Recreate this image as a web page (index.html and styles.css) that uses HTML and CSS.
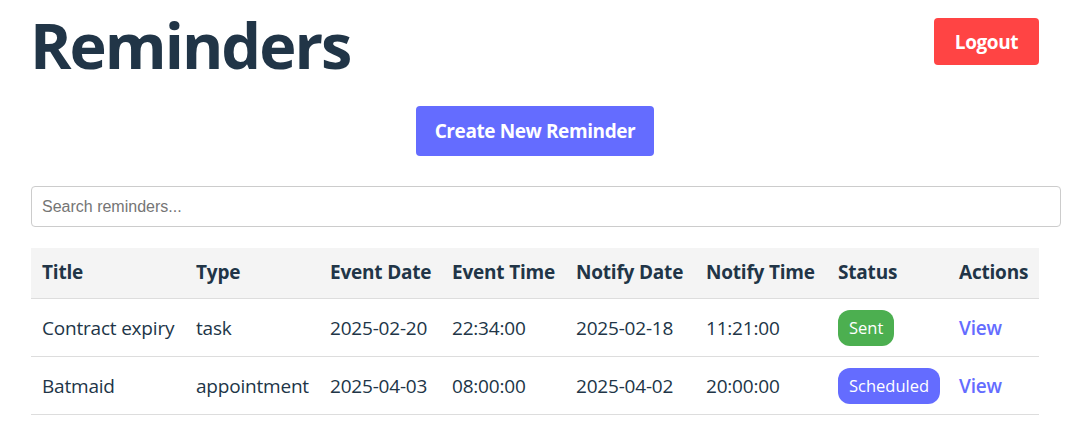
FILE: index.html
```html
<!DOCTYPE html>
<html lang="en">
<head>
<meta charset="utf-8">
<title>Reminders</title>
<link rel="stylesheet" href="styles.css">
</head>
<body>
<div class="page">
  <header class="topbar">
    <h1 class="title">Reminders</h1>
    <button class="btn btn-logout" type="button">Logout</button>
  </header>
  <div class="create-row">
    <button class="btn btn-create" type="button">Create New Reminder</button>
  </div>
  <input class="search" type="text" placeholder="Search reminders...">
  <table class="reminders">
    <colgroup>
      <col class="c-title"><col class="c-type"><col class="c-edate"><col class="c-etime">
      <col class="c-ndate"><col class="c-ntime"><col class="c-status"><col class="c-actions">
    </colgroup>
    <thead>
      <tr>
        <th>Title</th><th>Type</th><th>Event Date</th><th>Event Time</th>
        <th>Notify Date</th><th>Notify Time</th><th>Status</th><th>Actions</th>
      </tr>
    </thead>
    <tbody>
      <tr>
        <td>Contract expiry</td><td>task</td><td>2025-02-20</td><td>22:34:00</td>
        <td>2025-02-18</td><td>11:21:00</td>
        <td><span class="badge badge-sent">Sent</span></td>
        <td><a class="view" href="#">View</a></td>
      </tr>
      <tr>
        <td>Batmaid</td><td>appointment</td><td>2025-04-03</td><td>08:00:00</td>
        <td>2025-04-02</td><td>20:00:00</td>
        <td><span class="badge badge-scheduled">Scheduled</span></td>
        <td><a class="view" href="#">View</a></td>
      </tr>
    </tbody>
  </table>
</div>
</body>
</html>
```
FILE: styles.css
```css
html, body {
  margin: 0;
  padding: 0;
  background: #ffffff;
}
body {
  font-family: "Open Sans", "Noto Sans", sans-serif;
  color: #213547;
}
.page {
  width: 1008px;
  padding-left: 31px;
}
.topbar {
  display: flex;
  justify-content: space-between;
  align-items: flex-start;
}
.title {
  margin: 10px 0 0 -1px;
  font-size: 63px;
  line-height: 1.1;
  font-weight: 700;
  letter-spacing: -2px;
  color: #213547;
}
.btn {
  border: none;
  border-radius: 4px;
  color: #ffffff;
  font-family: "Open Sans", "Noto Sans", sans-serif;
  font-weight: 700;
  font-size: 19px;
  cursor: pointer;
  letter-spacing: -0.4px;
}
.btn-logout {
  margin-top: 18px;
  height: 47px;
  width: 105px;
  padding: 0;
  background: #ff4444;
}
.create-row {
  display: flex;
  justify-content: center;
  margin-top: 27px;
}
.btn-create {
  height: 50px;
  width: 238px;
  padding: 0;
  background: #646cff;
}
.search {
  display: block;
  margin-top: 30px;
  width: 100%;
  padding: 10px;
  border: 1px solid #cccccc;
  border-radius: 4px;
  font-family: "Liberation Sans", Arial, sans-serif;
  font-size: 16px;
  line-height: 19px;
  color: #213547;
}
.search::placeholder {
  color: #757575;
}
.reminders {
  margin-top: 21px;
  width: 100%;
  border-collapse: collapse;
  table-layout: fixed;
  font-size: 19px;
}
.c-title { width: 154px; }
.c-type { width: 134px; }
.c-edate { width: 122px; }
.c-etime { width: 124px; }
.c-ndate { width: 130px; }
.c-ntime { width: 132px; }
.c-status { width: 121px; }
.c-actions { width: 91px; }
.reminders th,
.reminders td {
  text-align: left;
  white-space: nowrap;
  border-bottom: 1px solid #dddddd;
  padding: 12px 11px 13px;
  line-height: 25px;
  letter-spacing: -0.2px;
}
.reminders th {
  background: #f4f4f4;
  font-weight: 700;
}
.reminders td {
  padding-top: 11px;
  padding-bottom: 10px;
  height: 36px;
}
.badge {
  display: inline-block;
  height: 36px;
  line-height: 36px;
  padding: 0 11px;
  border-radius: 12px;
  color: #ffffff;
  font-size: 16.5px;
  letter-spacing: 0;
  vertical-align: middle;
}
.badge-sent { background: #4caf50; }
.badge-scheduled { background: #646cff; }
.view {
  color: #646cff;
  font-weight: 600;
  text-decoration: none;
}
```
